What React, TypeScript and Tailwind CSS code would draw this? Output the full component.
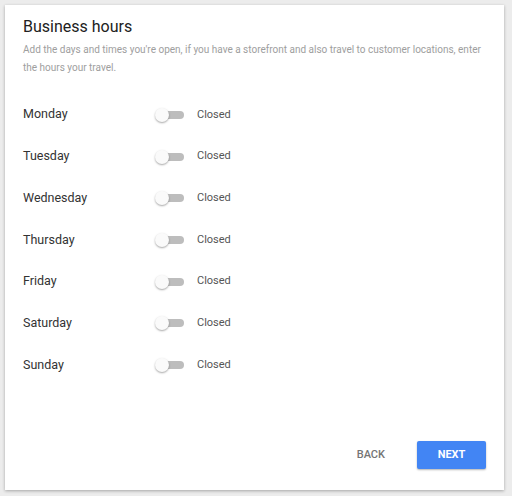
import React from 'react';

const days = ['Monday', 'Tuesday', 'Wednesday', 'Thursday', 'Friday', 'Saturday', 'Sunday'];

const Toggle: React.FC = () => (
  <div className="relative h-[14px] w-[30px]">
    <div className="absolute left-[6px] top-[3px] h-[8px] w-[23px] rounded-full bg-[#bdbdbd]" />
    <div className="absolute left-0 top-0 h-[14px] w-[14px] rounded-full bg-[#fafafa] shadow-[0_1px_2px_rgba(0,0,0,0.35)]" />
  </div>
);

export default function App() {
  return (
    <div className="h-[496px] w-[512px] bg-[#ececec] pl-[5px] pt-[5px] font-['Roboto',sans-serif]">
      <div className="flex h-[485px] w-[499px] flex-col bg-white px-[18px] shadow-[0_1px_3px_rgba(0,0,0,0.3)]">
        <h1 className="mt-[12px] text-[16px] leading-[20px] text-[#212121]">Business hours</h1>
        <p className="mt-[4px] text-[10px] leading-[18px] text-[#9e9e9e]">
          Add the days and times you're open, if you have a storefront and also travel to customer locations, enter
          the hours your travel.
        </p>
        <div className="mt-[17px] flex flex-col">
          {days.map(day => (
            <div key={day} className="flex h-[41.7px] items-center">
              <span className="w-[132px] text-[12.5px] text-[#333333]">{day}</span>
              <Toggle />
              <span className="ml-[12px] text-[11px] text-[#555555]">Closed</span>
            </div>
          ))}
        </div>
        <div className="mt-auto mb-[21px] flex items-center justify-end gap-[32px]">
          <button className="text-[11px] font-medium text-[#757575]">BACK</button>
          <button className="h-[28px] w-[69px] rounded-[2px] bg-[#4285f4] text-[11px] font-bold text-white shadow-[0_1px_2px_rgba(0,0,0,0.3)]">
            NEXT
          </button>
        </div>
      </div>
    </div>
  );
}
